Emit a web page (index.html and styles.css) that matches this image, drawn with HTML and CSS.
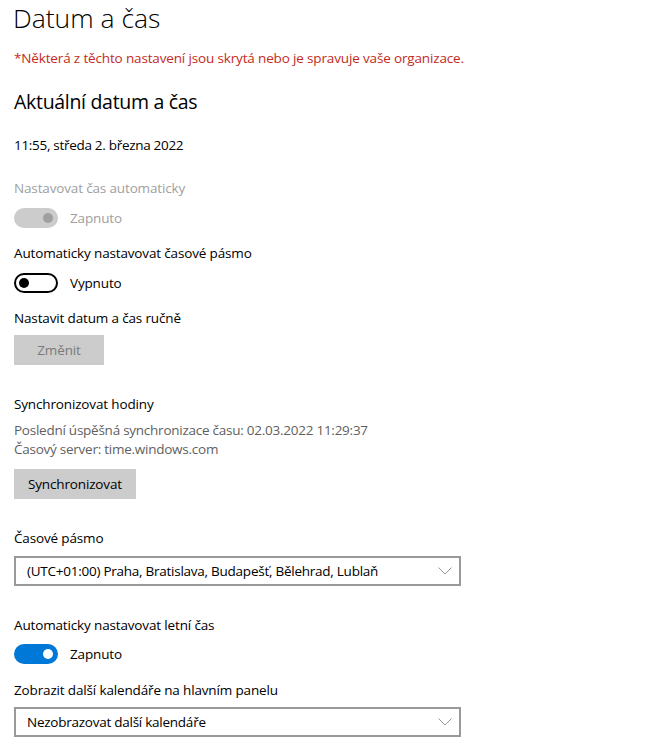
FILE: index.html
```html
<!DOCTYPE html>
<html lang="cs">
<head>
<meta charset="utf-8">
<title>Datum a čas</title>
<link rel="stylesheet" href="styles.css">
</head>
<body>
<main class="page">
  <h1 class="title">Datum a čas</h1>
  <p class="warning">*Některá z těchto nastavení jsou skrytá nebo je spravuje vaše organizace.</p>
  <h2 class="subtitle">Aktuální datum a čas</h2>
  <p class="text date">11:55, středa 2. března 2022</p>

  <p class="text label disabled gap-l">Nastavovat čas automaticky</p>
  <div class="toggle-row gap-s">
    <span class="toggle toggle-disabled"><span class="knob"></span></span>
    <span class="toggle-text disabled">Zapnuto</span>
  </div>

  <p class="text label gap-m">Automaticky nastavovat časové pásmo</p>
  <div class="toggle-row gap-s">
    <span class="toggle toggle-off"><span class="knob"></span></span>
    <span class="toggle-text">Vypnuto</span>
  </div>

  <p class="text label gap-m">Nastavit datum a čas ručně</p>
  <button class="btn btn-disabled gap-xs" disabled>Změnit</button>

  <p class="text label gap-xl">Synchronizovat hodiny</p>
  <p class="text info gap-xs">Poslední úspěšná synchronizace času: 02.03.2022 11:29:37<br>Časový server: time.windows.com</p>
  <button class="btn gap-s">Synchronizovat</button>

  <p class="text label gap-xl">Časové pásmo</p>
  <div class="select gap-sel">
    <span class="select-text">(UTC+01:00) Praha, Bratislava, Budapešť, Bělehrad, Lublaň</span>
    <svg class="chevron" width="14" height="8" viewBox="0 0 14 8"><path d="M0.5 0.5 L7 7 L13.5 0.5" fill="none" stroke="#9a9a9a" stroke-width="1"/></svg>
  </div>

  <p class="text label gap-xl">Automaticky nastavovat letní čas</p>
  <div class="toggle-row gap-t">
    <span class="toggle toggle-on"><span class="knob"></span></span>
    <span class="toggle-text">Zapnuto</span>
  </div>

  <p class="text label gap-m2">Zobrazit další kalendáře na hlavním panelu</p>
  <div class="select gap-xs">
    <span class="select-text">Nezobrazovat další kalendáře</span>
    <svg class="chevron" width="14" height="8" viewBox="0 0 14 8"><path d="M0.5 0.5 L7 7 L13.5 0.5" fill="none" stroke="#9a9a9a" stroke-width="1"/></svg>
  </div>
</main>
</body>
</html>
```

FILE: styles.css
```css
* { box-sizing: border-box; }
html, body { margin: 0; padding: 0; background: #ffffff; }
body {
  font-family: "Open Sans", "Noto Sans", "Liberation Sans", sans-serif;
  font-size: 13.5px;
  letter-spacing: -0.15px;
  color: #000000;
}
.page { padding: 0 0 0 14px; width: 651px; }
p, h1, h2 { margin: 0; }
.title {
  font-size: 26.5px;
  font-weight: 300;
  letter-spacing: 0;
  line-height: 36px;
  margin-left: -1px;
}
.warning {
  color: #c42b1c;
  line-height: 20px;
  margin-top: 12px;
}
.subtitle {
  font-size: 19.5px;
  font-weight: 400;
  letter-spacing: -0.3px;
  line-height: 28px;
  margin-top: 20px;
}
.text { line-height: 20px; }
.date { margin-top: 19px; letter-spacing: -0.3px; }
.disabled { color: #a0a0a0; }
.info { color: #5f5f5f; line-height: 19px; letter-spacing: -0.25px; }

.gap-xs { margin-top: 7px; }
.gap-sel { margin-top: 8px; }
.gap-t { margin-top: 9px; }
.gap-s { margin-top: 10px; }
.gap-m { margin-top: 15px; }
.gap-m2 { margin-top: 16px; }
.gap-l { margin-top: 23px; }
.gap-xl { margin-top: 29px; }

.toggle-row {
  display: flex;
  align-items: center;
  height: 20px;
  gap: 12px;
}
.toggle {
  width: 44px;
  height: 20px;
  border-radius: 10px;
  display: flex;
  align-items: center;
  flex: none;
}
.knob {
  width: 10px;
  height: 10px;
  border-radius: 50%;
}
.toggle-disabled { background: #cccccc; justify-content: flex-end; padding-right: 5px; }
.toggle-disabled .knob { background: #a0a0a0; }
.toggle-off { border: 2px solid #000000; padding-left: 3px; }
.toggle-off .knob { background: #000000; }
.toggle-on { background: #0078d7; justify-content: flex-end; padding-right: 5px; }
.toggle-on .knob { background: #ffffff; }
.toggle-text { line-height: 20px; margin-top: -1px; }

.btn {
  display: block;
  height: 30px;
  min-width: 90px;
  padding: 0 14px;
  border: none;
  background: #cccccc;
  font-family: inherit;
  font-size: 13.5px;
  letter-spacing: -0.15px;
  color: #000000;
}
.btn-disabled { color: #7a7a7a; }

.select {
  width: 447px;
  height: 30px;
  border: 2px solid #999999;
  display: flex;
  align-items: center;
  justify-content: space-between;
  padding: 0 6px 0 11px;
}
.select-text { line-height: 20px; letter-spacing: -0.25px; }
.chevron { flex: none; margin-right: 1px; }
```
